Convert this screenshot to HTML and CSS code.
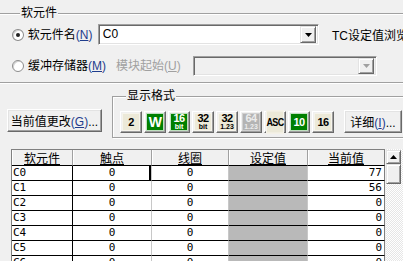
FILE: index.html
```html
<!DOCTYPE html>
<html lang="zh-CN">
	<head>
		<meta charset="UTF-8" />
		<title>软元件监视</title>
		<link rel="stylesheet" href="styles.css">
	</head>
	<body>
		<div class="page">
			<fieldset class="group device-group">
				<legend>软元件</legend>
				<div class="row row-first">
					<span class="radio checked"></span>
					<label class="radio-label w-name">软元件名<span class="key">(<u>N</u>)</span></label>
					<div class="combo combo-name">
						<span class="combo-text">C0</span>
						<span class="drop">
							<svg width="7" height="4" viewBox="0 0 7 4"><polygon points="0,0 7,0 3.5,4" fill="#000" /></svg>
						</span>
					</div>
					<span class="tc-label">TC设定值浏览</span>
				</div>
				<div class="row row-second">
					<span class="radio"></span>
					<label class="radio-label w-buffer">缓冲存储器<span class="key">(<u>M</u>)</span></label>
					<label class="radio-label w-module disabled">模块起始(<u>U</u>)</label>
					<div class="combo combo-module disabled">
						<span class="combo-text"></span>
						<span class="drop">
							<svg width="7" height="4" viewBox="0 0 7 4"><polygon points="0,0 7,0 3.5,4" fill="#a0a0a0" /></svg>
						</span>
					</div>
				</div>
			</fieldset>

			<div class="mid">
				<button class="btn btn-change">当前值更改<span class="key">(<u>G</u>)</span>...</button>
				<fieldset class="group fmt-group">
					<legend>显示格式</legend>
					<div class="fmt-row">
						<button class="fmt"><span class="face">2</span></button>
						<button class="fmt"><span class="face on big">W</span></button>
						<button class="fmt"><span class="face on">16<span class="sub">bit</span></span></button>
						<button class="fmt"><span class="face">32<span class="sub">bit</span></span></button>
						<button class="fmt"><span class="face">32<span class="sub">1.23</span></span></button>
						<button class="fmt"><span class="face off">64<span class="sub">1.23</span></span></button>
						<button class="fmt"><span class="face narrow">ASC</span></button>
						<button class="fmt"><span class="face on">10</span></button>
						<button class="fmt"><span class="face">16</span></button>
						<button class="btn btn-detail">详细<span class="key">(<u>I</u>)</span>...</button>
					</div>
				</fieldset>
			</div>

			<div class="grid">
				<table class="device-table">
					<colgroup>
						<col class="c-name" />
						<col class="c-contact" />
						<col class="c-coil" />
						<col class="c-set" />
						<col class="c-cur" />
					</colgroup>
					<thead>
						<tr>
							<th><u>软元件</u></th>
							<th><u>触点</u></th>
							<th><u>线圈</u></th>
							<th><u>设定值</u></th>
							<th><u>当前值</u></th>
						</tr>
					</thead>
					<tbody>
						<tr><td class="name">C0</td><td class="focus">0</td><td>0</td><td class="set"></td><td class="cur">77</td></tr>
						<tr><td class="name">C1</td><td>0</td><td>0</td><td class="set"></td><td class="cur">56</td></tr>
						<tr><td class="name">C2</td><td>0</td><td>0</td><td class="set"></td><td class="cur">0</td></tr>
						<tr><td class="name">C3</td><td>0</td><td>0</td><td class="set"></td><td class="cur">0</td></tr>
						<tr><td class="name">C4</td><td>0</td><td>0</td><td class="set"></td><td class="cur">0</td></tr>
						<tr><td class="name">C5</td><td>0</td><td>0</td><td class="set"></td><td class="cur">0</td></tr>
						<tr><td class="name">C6</td><td>0</td><td>0</td><td class="set"></td><td class="cur">0</td></tr>
					</tbody>
				</table>
				<div class="vscroll">
					<span class="sb-btn">
						<svg width="7" height="4" viewBox="0 0 7 4"><polygon points="3.5,0 7,4 0,4" fill="#000" /></svg>
					</span>
					<span class="sb-thumb"></span>
				</div>
			</div>
		</div>
	</body>
</html>
```

FILE: styles.css
```css
html,
body {
	margin: 0;
	overflow: hidden;
}
body {
	background: #f0f0f0;
	font-family: "Liberation Sans", "Noto Sans CJK SC", sans-serif;
	font-size: 12px;
	color: #000;
}
.page {
	width: 403px;
	height: 261px;
	overflow: hidden;
}
u {
	text-decoration: underline;
}
.key {
	color: #1f3c8c;
}

/* group boxes */
.group {
	border: 1px solid #a0a0a0;
	box-shadow: inset 1px 1px #fff, 1px 1px #fff;
	padding: 0;
	min-width: 0;
}
.group legend {
	padding: 0 1px;
	line-height: 16px;
	background: #f0f0f0;
}
.device-group {
	margin: 5px -6px 0 -6px;
	padding: 3px 0 6px 17px;
}
.device-group legend {
	margin-left: 8px;
}

.row {
	display: flex;
	align-items: center;
	height: 21px;
	white-space: nowrap;
}
.row-second {
	margin-top: 10px;
}
.radio {
	width: 12px;
	height: 12px;
	box-sizing: border-box;
	border-radius: 50%;
	border: 1px solid #8c8c8c;
	background: #fff;
	box-shadow: inset 1px 1px #d4d4d4;
	margin-right: 4px;
	display: flex;
	align-items: center;
	justify-content: center;
}
.radio.checked::after {
	content: "";
	width: 4px;
	height: 4px;
	border-radius: 50%;
	background: #222;
}
.radio-label {
	line-height: 16px;
}
.w-name {
	width: 72px;
}
.w-buffer {
	width: 88px;
}
.w-module {
	width: 77px;
}
.disabled {
	color: #a0a0a0;
}

.combo {
	height: 21px;
	box-sizing: border-box;
	display: flex;
	align-items: center;
	background: #fff;
	border: 1px solid;
	border-color: #a0a0a0 #fff #fff #a0a0a0;
	box-shadow: inset 1px 1px #696969, inset -1px -1px #e3e3e3;
	padding: 2px;
}
.combo.disabled {
	background: #f0f0f0;
}
.combo-name {
	width: 227px;
}
.combo-module {
	width: 184px;
	height: 20px;
}
.combo-text {
	flex: 1;
	padding-left: 2px;
	line-height: 15px;
}
.drop {
	width: 16px;
	height: 17px;
	box-sizing: border-box;
	display: flex;
	align-items: center;
	justify-content: center;
	background: #f0f0f0;
	border: 1px solid;
	border-color: #e3e3e3 #696969 #696969 #e3e3e3;
	box-shadow: inset 1px 1px #fff, inset -1px -1px #a0a0a0;
}
.combo-module .drop {
	height: 16px;
}
.tc-label {
	margin-left: 13px;
}

/* buttons */
.btn {
	font: inherit;
	color: #000;
	background: #f0f0f0;
	border: 1px solid;
	border-color: #fff #696969 #696969 #fff;
	box-shadow: inset -1px -1px #a0a0a0, inset 1px 1px #e3e3e3;
	padding: 0;
	height: 23px;
	white-space: nowrap;
}
.mid {
	display: flex;
	align-items: flex-start;
}
.btn-change {
	margin: 26px 0 0 7px;
	width: 95px;
}
.fmt-group {
	flex: 1;
	margin: 5px -6px 0 10px;
	padding: 6px 0 4px 7px;
}
.fmt-group legend {
	margin-left: 6px;
}
.fmt-row {
	display: flex;
	align-items: center;
	gap: 2px;
}
.fmt {
	width: 22px;
	height: 22px;
	box-sizing: border-box;
	padding: 1px;
	border: 1px solid;
	border-color: #fff #696969 #696969 #fff;
	box-shadow: inset -1px -1px #a0a0a0;
	background: #f0f0f0;
	display: flex;
}
.face {
	flex: 1;
	display: flex;
	flex-direction: column;
	align-items: center;
	justify-content: center;
	background: #ece9d8;
	box-shadow: inset 0 0 0 1px #f6f4ec;
	font: bold 11px/10px "Liberation Sans", sans-serif;
	color: #000;
	letter-spacing: -0.5px;
}
.face.on {
	background: #008000;
	color: #fff;
	box-shadow: inset 0 0 0 1px #bfe0bf;
}
.face.off {
	background: #b4b4b4;
	color: #ececec;
	box-shadow: inset 0 0 0 1px #d0d0d0;
}
.face.big {
	font-size: 14px;
	line-height: 14px;
}
.face.narrow {
	font-size: 9px;
	letter-spacing: -0.6px;
	transform: scaleY(1.3);
}
.sub {
	font-size: 7px;
	line-height: 7px;
	letter-spacing: 0;
}
.btn-detail {
	margin-left: 8px;
	width: 58px;
}

/* device table */
.grid {
	display: flex;
	margin: 11px 0 0 11px;
}
.device-table {
	table-layout: fixed;
	border-collapse: separate;
	border-spacing: 0;
	width: 374px;
	border-top: 1px solid #808080;
	border-left: 1px solid #808080;
	font-family: "DejaVu Sans Mono", monospace;
	font-size: 11px;
}
.c-name {
	width: 61px;
}
.c-contact {
	width: 79px;
}
.c-coil {
	width: 77px;
}
.c-set {
	width: 79px;
}
.c-cur {
	width: 77px;
}
.device-table th {
	height: 15px;
	padding: 0;
	font: normal 12px/15px "Noto Sans CJK SC", sans-serif;
	background: #f0f0f0;
	border-right: 1px solid #a0a0a0;
	border-bottom: 1px solid #000;
	box-shadow: inset 1px 0 #fff;
}
.device-table td {
	height: 14px;
	padding: 0 1px;
	line-height: 14px;
	text-align: center;
	background: #fff;
	border-right: 1px solid #c8c8c8;
	border-bottom: 1px solid #000;
	white-space: nowrap;
	overflow: hidden;
}
.device-table td.name {
	text-align: left;
	border-right-color: #000;
}
.device-table td.set {
	background: #b9b9b9;
}
.device-table td.cur {
	text-align: right;
	padding-right: 2px;
	border-right-color: #808080;
}
.device-table th:last-child {
	border-right-color: #808080;
}
.device-table td.focus {
	box-shadow: inset -2px 0 #000, inset 1px 0 #fff;
}

.vscroll {
	width: 17px;
	height: 120px;
	margin-left: 1px;
	display: flex;
	flex-direction: column;
	background: repeating-conic-gradient(#fff 0 25%, #e6e6e6 0 50%) 0 0 / 2px 2px;
}
.sb-btn,
.sb-thumb {
	width: 15px;
	box-sizing: border-box;
	background: #f0f0f0;
	border: 1px solid;
	border-color: #e3e3e3 #696969 #696969 #e3e3e3;
	box-shadow: inset 1px 1px #fff, inset -1px -1px #a0a0a0;
}
.sb-btn {
	height: 14px;
	margin-top: 1px;
	display: flex;
	align-items: center;
	justify-content: center;
}
.sb-thumb {
	height: 20px;
	margin-top: 0;
}
```
